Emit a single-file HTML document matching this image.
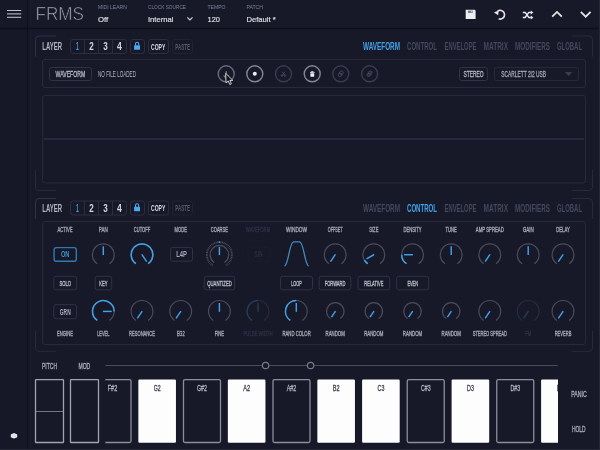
<!DOCTYPE html>
<html lang="en"><head><meta charset="utf-8"><title>FRMS</title>
<style>
html,body{margin:0;padding:0;background:#171929;overflow:hidden}
svg{display:block;will-change:transform;font-family:"Liberation Sans",sans-serif}
text{white-space:pre}
</style></head>
<body>
<svg width="600" height="450" viewBox="0 0 600 450">
<rect x="0" y="0" width="600" height="450" fill="#171929"/>
<rect x="0" y="0" width="27" height="450" fill="#161827"/>
<rect x="26.9" y="0" width="1.2" height="450" fill="#0e0f18"/>
<rect x="0" y="27.9" width="600" height="1.3" fill="#0d0e16"/>
<rect x="599" y="0" width="1" height="450" fill="#262838"/>
<rect x="0" y="449" width="600" height="1" fill="#262838"/>
<line x1="7.00" y1="10.50" x2="21.20" y2="10.50" stroke="#c2c3cd" stroke-width="1.05" />
<line x1="7.00" y1="13.90" x2="21.20" y2="13.90" stroke="#c2c3cd" stroke-width="1.05" />
<line x1="7.00" y1="17.30" x2="21.20" y2="17.30" stroke="#c2c3cd" stroke-width="1.05" />
<text x="35.50" y="20.00" font-size="19.2" fill="#a8a9b6" font-weight="normal" textLength="48.50" lengthAdjust="spacingAndGlyphs" stroke="#171929" stroke-width="0.65">FRMS</text>
<text x="98.00" y="9.10" font-size="6.2" fill="#7c819c" font-weight="normal" textLength="28.80" lengthAdjust="spacingAndGlyphs" >MIDI LEARN</text>
<text x="98.00" y="22.20" font-size="7.9" fill="#dcdde4" font-weight="normal" textLength="10.30" lengthAdjust="spacingAndGlyphs" stroke="#dcdde4" stroke-width="0.2">Off</text>
<text x="148.00" y="9.10" font-size="6.2" fill="#7c819c" font-weight="normal" textLength="38.00" lengthAdjust="spacingAndGlyphs" >CLOCK SOURCE</text>
<text x="148.00" y="22.20" font-size="7.9" fill="#dcdde4" font-weight="normal" textLength="25.50" lengthAdjust="spacingAndGlyphs" stroke="#dcdde4" stroke-width="0.2">Internal</text>
<text x="207.50" y="9.10" font-size="6.2" fill="#7c819c" font-weight="normal" textLength="18.00" lengthAdjust="spacingAndGlyphs" >TEMPO</text>
<text x="207.50" y="22.20" font-size="7.9" fill="#dcdde4" font-weight="normal" textLength="12.50" lengthAdjust="spacingAndGlyphs" stroke="#dcdde4" stroke-width="0.2">120</text>
<text x="246.40" y="9.10" font-size="6.2" fill="#7c819c" font-weight="normal" textLength="16.50" lengthAdjust="spacingAndGlyphs" >PATCH</text>
<text x="246.40" y="22.20" font-size="7.9" fill="#dcdde4" font-weight="normal" textLength="29.40" lengthAdjust="spacingAndGlyphs" stroke="#dcdde4" stroke-width="0.2">Default *</text>
<path d="M187.3 17.4 L189.9 19.9 L192.5 17.4" fill="none" stroke="#d4d5dc" stroke-width="1.1"/>
<path d="M465.7 9.7 h9 l0.9 0.9 v8.4 h-9.9 z" fill="#eeeef2"/>
<rect x="468" y="10.6" width="5" height="2.4" fill="#7a7c8a"/>
<rect x="471.4" y="10.9" width="1" height="1.6" fill="#eeeef2"/>
<path d="M497.6 11.1 A4.4 4.4 0 1 1 498.6 18.8" fill="none" stroke="#e6e6ea" stroke-width="1.6"/>
<path d="M493.9 12.6 L498.6 10.4 L498.2 15.2 z" fill="#e6e6ea"/>
<path d="M522.8 12.4 h2.4 l3.6 5 h2.6 M522.8 17.4 h2.4 l3.6 -5 h2.6" fill="none" stroke="#e6e6ea" stroke-width="1.5"/>
<path d="M530.8 10.4 l2.6 2 l-2.6 2 z M530.8 15.4 l2.6 2 l-2.6 2 z" fill="#e6e6ea"/>
<path d="M552.2 16.7 L557 11.9 L561.8 16.7" fill="none" stroke="#e6e6ea" stroke-width="1.7"/>
<path d="M580.8 11.8 L585.7 16.7 L590.6 11.8" fill="none" stroke="#e6e6ea" stroke-width="1.7"/>
<path d="M35.5 56.6 V39.5 a3.5 3.5 0 0 1 3.5 -3.5 H56.3" fill="none" stroke="#303246" stroke-width="1"/>
<path d="M571.7 36 H589.0 a3.5 3.5 0 0 1 3.5 3.5 V56.6" fill="none" stroke="#282a3a" stroke-width="1"/>
<path d="M35.5 169.9 V187.0 a3.5 3.5 0 0 0 3.5 3.5 H56.3" fill="none" stroke="#282a3a" stroke-width="1"/>
<path d="M571.7 190.5 H589.0 a3.5 3.5 0 0 0 3.5 -3.5 V169.9" fill="none" stroke="#282a3a" stroke-width="1"/>
<text x="42.30" y="50.00" font-size="10.0" fill="#b4b5c0" font-weight="bold" textLength="19.70" lengthAdjust="spacingAndGlyphs" >LAYER</text>
<rect x="70.50" y="39.50" width="56.00" height="14.00" rx="2.5" fill="none" stroke="#2c2e40" stroke-width="1" />
<line x1="84.50" y1="39.50" x2="84.50" y2="53.50" stroke="#2c2e40" stroke-width="1" />
<line x1="98.50" y1="39.50" x2="98.50" y2="53.50" stroke="#2c2e40" stroke-width="1" />
<line x1="112.50" y1="39.50" x2="112.50" y2="53.50" stroke="#2c2e40" stroke-width="1" />
<text x="76.10" y="50.10" font-size="10.0" fill="#3f9add" font-weight="bold" textLength="2.80" lengthAdjust="spacingAndGlyphs" >1</text>
<text x="89.25" y="50.10" font-size="10.0" fill="#d4d4dc" font-weight="bold" textLength="4.50" lengthAdjust="spacingAndGlyphs" >2</text>
<text x="103.25" y="50.10" font-size="10.0" fill="#d4d4dc" font-weight="bold" textLength="4.50" lengthAdjust="spacingAndGlyphs" >3</text>
<text x="117.10" y="50.10" font-size="10.0" fill="#d4d4dc" font-weight="bold" textLength="4.80" lengthAdjust="spacingAndGlyphs" >4</text>
<rect x="130.50" y="39.50" width="14.00" height="14.00" rx="2.5" fill="none" stroke="#2c2e40" stroke-width="1" />
<rect x="134.1" y="45.2" width="5.9" height="4.6" rx="0.6" fill="#4aaaf0"/>
<path d="M135.5 45.6 v-1.7 a1.6 1.6 0 0 1 3.2 0 v1.7" fill="none" stroke="#4aaaf0" stroke-width="1.1"/>
<rect x="148.50" y="39.50" width="20.00" height="14.00" rx="2.5" fill="none" stroke="#2c2e40" stroke-width="1" />
<text x="151.00" y="49.70" font-size="8.8" fill="#dcdce3" font-weight="bold" textLength="14.30" lengthAdjust="spacingAndGlyphs" >COPY</text>
<rect x="172.50" y="39.50" width="20.00" height="14.00" rx="2.5" fill="none" stroke="#212333" stroke-width="1" />
<text x="175.20" y="49.70" font-size="8.8" fill="#585b6e" font-weight="bold" textLength="14.80" lengthAdjust="spacingAndGlyphs" >PASTE</text>
<text x="363.00" y="50.00" font-size="10.8" fill="#41a2e6" font-weight="bold" textLength="37.00" lengthAdjust="spacingAndGlyphs" >WAVEFORM</text>
<text x="407.00" y="50.00" font-size="10.8" fill="#44475d" font-weight="bold" textLength="30.00" lengthAdjust="spacingAndGlyphs" >CONTROL</text>
<text x="444.50" y="50.00" font-size="10.8" fill="#44475d" font-weight="bold" textLength="32.00" lengthAdjust="spacingAndGlyphs" >ENVELOPE</text>
<text x="483.50" y="50.00" font-size="10.8" fill="#44475d" font-weight="bold" textLength="24.50" lengthAdjust="spacingAndGlyphs" >MATRIX</text>
<text x="515.00" y="50.00" font-size="10.8" fill="#44475d" font-weight="bold" textLength="35.00" lengthAdjust="spacingAndGlyphs" >MODIFIERS</text>
<text x="557.00" y="50.00" font-size="10.8" fill="#44475d" font-weight="bold" textLength="25.00" lengthAdjust="spacingAndGlyphs" >GLOBAL</text>
<rect x="42.50" y="59.50" width="543.00" height="28.00" rx="2.5" fill="none" stroke="#282a3a" stroke-width="1" />
<rect x="49.50" y="67.50" width="42.00" height="13.00" rx="2" fill="none" stroke="#303246" stroke-width="1" />
<text x="55.60" y="77.00" font-size="8.4" fill="#b6b7c2" font-weight="normal" textLength="29.60" lengthAdjust="spacingAndGlyphs"  stroke="#b6b7c2" stroke-width="0.32">WAVEFORM</text>
<text x="98.00" y="77.00" font-size="8.4" fill="#b4b5c0" font-weight="normal" textLength="38.00" lengthAdjust="spacingAndGlyphs" >NO FILE LOADED</text>
<circle cx="226.2" cy="73.8" r="8.0" fill="none" stroke="#686a7a" stroke-width="1.4"/>
<circle cx="254.8" cy="73.8" r="8.0" fill="none" stroke="#858793" stroke-width="1.4"/>
<circle cx="283.5" cy="73.8" r="8.0" fill="none" stroke="#3a3c4e" stroke-width="1.4"/>
<circle cx="312.2" cy="73.8" r="8.0" fill="none" stroke="#858793" stroke-width="1.4"/>
<circle cx="340.8" cy="73.8" r="8.0" fill="none" stroke="#3a3c4e" stroke-width="1.4"/>
<circle cx="369.6" cy="73.8" r="8.0" fill="none" stroke="#3a3c4e" stroke-width="1.4"/>
<path d="M226.2 71 v7.6 M223.6 75.4 l2.6 3 l2.6 -3" fill="none" stroke="#7c7e8c" stroke-width="1.1"/>
<circle cx="254.8" cy="73.8" r="2" fill="#f0f0f4"/>
<path d="M282 71.6 l2.8 3.6 M285 71.6 l-2.8 3.6" fill="none" stroke="#4a4c5e" stroke-width="0.9"/>
<circle cx="282" cy="75.6" r="0.9" fill="none" stroke="#4a4c5e" stroke-width="0.8"/><circle cx="285" cy="75.6" r="0.9" fill="none" stroke="#4a4c5e" stroke-width="0.8"/>
<path d="M310.4 73.3 h3.8 v2.9 a0.6 0.6 0 0 1 -0.6 0.6 h-2.6 a0.6 0.6 0 0 1 -0.6 -0.6 z" fill="#f0f0f4"/>
<path d="M310 72.4 h4.6 M311.3 71.6 h2" fill="none" stroke="#f0f0f4" stroke-width="0.9"/>
<g transform="translate(340.8 73.8) rotate(-20)" fill="none" stroke="#46485c" stroke-width="0.9"><rect x="-2.7" y="-0.9" width="3.3" height="3.1" rx="0.9"/><rect x="-0.7" y="-2.3" width="3.3" height="3.1" rx="0.9"/></g>
<g transform="translate(369.6 73.8) rotate(-20)" fill="none" stroke="#46485c" stroke-width="0.9"><rect x="-2.7" y="-0.9" width="3.3" height="3.1" rx="0.9"/><rect x="-0.7" y="-2.3" width="3.3" height="3.1" rx="0.9"/></g>
<path d="M367.40000000000003 76.2 L372.20000000000005 71.39999999999999" stroke="#46485c" stroke-width="0.8"/>
<path d="M225.7 73.3 l0.3 9.6 l2.2 -1.9 l1.6 3.5 l1.6 -0.7 l-1.6 -3.4 l3 0 z" fill="#14151d" stroke="#dcdce2" stroke-width="0.9" stroke-linejoin="round"/>
<rect x="459.50" y="67.50" width="28.10" height="13.00" rx="2" fill="none" stroke="#303246" stroke-width="1" />
<text x="463.40" y="77.00" font-size="8.4" fill="#b6b7c2" font-weight="normal" textLength="20.20" lengthAdjust="spacingAndGlyphs"  stroke="#b6b7c2" stroke-width="0.32">STEREO</text>
<rect x="494.50" y="67.50" width="84.00" height="13.00" rx="2" fill="none" stroke="#282a3a" stroke-width="1" />
<text x="501.30" y="77.00" font-size="8.4" fill="#a4a5b2" font-weight="normal" textLength="44.70" lengthAdjust="spacingAndGlyphs"  stroke="#a4a5b2" stroke-width="0.32">SCARLETT 2I2 USB</text>
<path d="M565 72 h7.4 l-3.7 4.2 z" fill="#3a3c4e"/>
<rect x="42.50" y="95.50" width="543.00" height="87.50" rx="2.5" fill="none" stroke="#282a3a" stroke-width="1" />
<line x1="44.00" y1="139.00" x2="584.00" y2="139.00" stroke="#383a4e" stroke-width="1" />
<path d="M35.5 219.1 V202.0 a3.5 3.5 0 0 1 3.5 -3.5 H56.3" fill="none" stroke="#303246" stroke-width="1"/>
<path d="M571.7 198.5 H589.0 a3.5 3.5 0 0 1 3.5 3.5 V219.1" fill="none" stroke="#282a3a" stroke-width="1"/>
<path d="M35.5 330.79999999999995 V347.9 a3.5 3.5 0 0 0 3.5 3.5 H56.3" fill="none" stroke="#282a3a" stroke-width="1"/>
<path d="M571.7 351.4 H589.0 a3.5 3.5 0 0 0 3.5 -3.5 V330.79999999999995" fill="none" stroke="#282a3a" stroke-width="1"/>
<text x="42.30" y="211.50" font-size="10.0" fill="#b4b5c0" font-weight="bold" textLength="19.70" lengthAdjust="spacingAndGlyphs" >LAYER</text>
<rect x="70.50" y="201.00" width="56.00" height="14.00" rx="2.5" fill="none" stroke="#2c2e40" stroke-width="1" />
<line x1="84.50" y1="201.00" x2="84.50" y2="215.00" stroke="#2c2e40" stroke-width="1" />
<line x1="98.50" y1="201.00" x2="98.50" y2="215.00" stroke="#2c2e40" stroke-width="1" />
<line x1="112.50" y1="201.00" x2="112.50" y2="215.00" stroke="#2c2e40" stroke-width="1" />
<text x="76.10" y="211.60" font-size="10.0" fill="#3f9add" font-weight="bold" textLength="2.80" lengthAdjust="spacingAndGlyphs" >1</text>
<text x="89.25" y="211.60" font-size="10.0" fill="#d4d4dc" font-weight="bold" textLength="4.50" lengthAdjust="spacingAndGlyphs" >2</text>
<text x="103.25" y="211.60" font-size="10.0" fill="#d4d4dc" font-weight="bold" textLength="4.50" lengthAdjust="spacingAndGlyphs" >3</text>
<text x="117.10" y="211.60" font-size="10.0" fill="#d4d4dc" font-weight="bold" textLength="4.80" lengthAdjust="spacingAndGlyphs" >4</text>
<rect x="130.50" y="201.00" width="14.00" height="14.00" rx="2.5" fill="none" stroke="#2c2e40" stroke-width="1" />
<rect x="134.1" y="206.7" width="5.9" height="4.6" rx="0.6" fill="#4aaaf0"/>
<path d="M135.5 207.1 v-1.7 a1.6 1.6 0 0 1 3.2 0 v1.7" fill="none" stroke="#4aaaf0" stroke-width="1.1"/>
<rect x="148.50" y="201.00" width="20.00" height="14.00" rx="2.5" fill="none" stroke="#2c2e40" stroke-width="1" />
<text x="151.00" y="211.20" font-size="8.8" fill="#dcdce3" font-weight="bold" textLength="14.30" lengthAdjust="spacingAndGlyphs" >COPY</text>
<rect x="172.50" y="201.00" width="20.00" height="14.00" rx="2.5" fill="none" stroke="#212333" stroke-width="1" />
<text x="175.20" y="211.20" font-size="8.8" fill="#585b6e" font-weight="bold" textLength="14.80" lengthAdjust="spacingAndGlyphs" >PASTE</text>
<text x="363.00" y="211.50" font-size="10.8" fill="#44475d" font-weight="bold" textLength="37.00" lengthAdjust="spacingAndGlyphs" >WAVEFORM</text>
<text x="407.00" y="211.50" font-size="10.8" fill="#41a2e6" font-weight="bold" textLength="30.00" lengthAdjust="spacingAndGlyphs" >CONTROL</text>
<text x="444.50" y="211.50" font-size="10.8" fill="#44475d" font-weight="bold" textLength="32.00" lengthAdjust="spacingAndGlyphs" >ENVELOPE</text>
<text x="483.50" y="211.50" font-size="10.8" fill="#44475d" font-weight="bold" textLength="24.50" lengthAdjust="spacingAndGlyphs" >MATRIX</text>
<text x="515.00" y="211.50" font-size="10.8" fill="#44475d" font-weight="bold" textLength="35.00" lengthAdjust="spacingAndGlyphs" >MODIFIERS</text>
<text x="557.00" y="211.50" font-size="10.8" fill="#44475d" font-weight="bold" textLength="25.00" lengthAdjust="spacingAndGlyphs" >GLOBAL</text>
<rect x="42.50" y="221.50" width="543.00" height="123.00" rx="2.5" fill="none" stroke="#282a3a" stroke-width="1" />
<text x="57.50" y="232.20" font-size="6.8" fill="#a9aab7" font-weight="normal" textLength="15.00" lengthAdjust="spacingAndGlyphs"  stroke="#a9aab7" stroke-width="0.32">ACTIVE</text>
<text x="98.80" y="232.20" font-size="6.8" fill="#a9aab7" font-weight="normal" textLength="9.00" lengthAdjust="spacingAndGlyphs"  stroke="#a9aab7" stroke-width="0.32">PAN</text>
<text x="133.80" y="232.20" font-size="6.8" fill="#a9aab7" font-weight="normal" textLength="16.40" lengthAdjust="spacingAndGlyphs"  stroke="#a9aab7" stroke-width="0.32">CUTOFF</text>
<text x="174.50" y="232.20" font-size="6.8" fill="#a9aab7" font-weight="normal" textLength="12.40" lengthAdjust="spacingAndGlyphs"  stroke="#a9aab7" stroke-width="0.32">MODE</text>
<text x="210.80" y="232.20" font-size="6.8" fill="#a9aab7" font-weight="normal" textLength="17.20" lengthAdjust="spacingAndGlyphs"  stroke="#a9aab7" stroke-width="0.32">COARSE</text>
<text x="245.80" y="232.20" font-size="6.8" fill="#2f3142" font-weight="normal" textLength="24.40" lengthAdjust="spacingAndGlyphs"  stroke="#2f3142" stroke-width="0.32">WAVEFORM</text>
<text x="286.10" y="232.20" font-size="6.8" fill="#a9aab7" font-weight="normal" textLength="21.00" lengthAdjust="spacingAndGlyphs"  stroke="#a9aab7" stroke-width="0.32">WINDOW</text>
<text x="327.70" y="232.20" font-size="6.8" fill="#a9aab7" font-weight="normal" textLength="15.00" lengthAdjust="spacingAndGlyphs"  stroke="#a9aab7" stroke-width="0.32">OFFSET</text>
<text x="369.20" y="232.20" font-size="6.8" fill="#a9aab7" font-weight="normal" textLength="9.20" lengthAdjust="spacingAndGlyphs"  stroke="#a9aab7" stroke-width="0.32">SIZE</text>
<text x="403.50" y="232.20" font-size="6.8" fill="#a9aab7" font-weight="normal" textLength="18.00" lengthAdjust="spacingAndGlyphs"  stroke="#a9aab7" stroke-width="0.32">DENSITY</text>
<text x="445.60" y="232.20" font-size="6.8" fill="#a9aab7" font-weight="normal" textLength="11.20" lengthAdjust="spacingAndGlyphs"  stroke="#a9aab7" stroke-width="0.32">TUNE</text>
<text x="475.80" y="232.20" font-size="6.8" fill="#a9aab7" font-weight="normal" textLength="28.00" lengthAdjust="spacingAndGlyphs"  stroke="#a9aab7" stroke-width="0.32">AMP SPREAD</text>
<text x="522.70" y="232.20" font-size="6.8" fill="#a9aab7" font-weight="normal" textLength="11.00" lengthAdjust="spacingAndGlyphs"  stroke="#a9aab7" stroke-width="0.32">GAIN</text>
<text x="556.25" y="232.20" font-size="6.8" fill="#a9aab7" font-weight="normal" textLength="13.50" lengthAdjust="spacingAndGlyphs"  stroke="#a9aab7" stroke-width="0.32">DELAY</text>
<text x="57.10" y="335.70" font-size="6.8" fill="#a9aab7" font-weight="normal" textLength="15.80" lengthAdjust="spacingAndGlyphs"  stroke="#a9aab7" stroke-width="0.32">ENGINE</text>
<text x="97.15" y="335.70" font-size="6.8" fill="#a9aab7" font-weight="normal" textLength="12.30" lengthAdjust="spacingAndGlyphs"  stroke="#a9aab7" stroke-width="0.32">LEVEL</text>
<text x="129.10" y="335.70" font-size="6.8" fill="#a9aab7" font-weight="normal" textLength="25.80" lengthAdjust="spacingAndGlyphs"  stroke="#a9aab7" stroke-width="0.32">RESONANCE</text>
<text x="176.70" y="335.70" font-size="6.8" fill="#a9aab7" font-weight="normal" textLength="8.00" lengthAdjust="spacingAndGlyphs"  stroke="#a9aab7" stroke-width="0.32">EG2</text>
<text x="214.65" y="335.70" font-size="6.8" fill="#a9aab7" font-weight="normal" textLength="9.50" lengthAdjust="spacingAndGlyphs"  stroke="#a9aab7" stroke-width="0.32">FINE</text>
<text x="243.50" y="335.70" font-size="6.8" fill="#2f3142" font-weight="normal" textLength="29.00" lengthAdjust="spacingAndGlyphs"  stroke="#2f3142" stroke-width="0.32">PULSE WIDTH</text>
<text x="282.45" y="335.70" font-size="6.8" fill="#a9aab7" font-weight="normal" textLength="28.30" lengthAdjust="spacingAndGlyphs"  stroke="#a9aab7" stroke-width="0.32">RAND COLOR</text>
<text x="325.55" y="335.70" font-size="6.8" fill="#a9aab7" font-weight="normal" textLength="19.30" lengthAdjust="spacingAndGlyphs"  stroke="#a9aab7" stroke-width="0.32">RANDOM</text>
<text x="364.15" y="335.70" font-size="6.8" fill="#a9aab7" font-weight="normal" textLength="19.30" lengthAdjust="spacingAndGlyphs"  stroke="#a9aab7" stroke-width="0.32">RANDOM</text>
<text x="402.85" y="335.70" font-size="6.8" fill="#a9aab7" font-weight="normal" textLength="19.30" lengthAdjust="spacingAndGlyphs"  stroke="#a9aab7" stroke-width="0.32">RANDOM</text>
<text x="441.55" y="335.70" font-size="6.8" fill="#a9aab7" font-weight="normal" textLength="19.30" lengthAdjust="spacingAndGlyphs"  stroke="#a9aab7" stroke-width="0.32">RANDOM</text>
<text x="472.70" y="335.70" font-size="6.8" fill="#a9aab7" font-weight="normal" textLength="34.20" lengthAdjust="spacingAndGlyphs"  stroke="#a9aab7" stroke-width="0.32">STEREO SPREAD</text>
<text x="525.20" y="335.70" font-size="6.8" fill="#2f3142" font-weight="normal" textLength="6.00" lengthAdjust="spacingAndGlyphs"  stroke="#2f3142" stroke-width="0.32">FM</text>
<text x="554.65" y="335.70" font-size="6.8" fill="#a9aab7" font-weight="normal" textLength="16.70" lengthAdjust="spacingAndGlyphs"  stroke="#a9aab7" stroke-width="0.32">REVERB</text>
<rect x="54.10" y="247.60" width="22.20" height="13.60" rx="2.2" fill="none" stroke="#3079b0" stroke-width="1.4" />
<text x="60.95" y="257.23" font-size="8.2" fill="#3f92cc" font-weight="bold" textLength="8.50" lengthAdjust="spacingAndGlyphs" >ON</text>
<rect x="170.50" y="247.40" width="22.00" height="13.80" rx="2.2" fill="none" stroke="#303246" stroke-width="1" />
<text x="176.20" y="257.34" font-size="8.8" fill="#a9aab7" font-weight="bold" textLength="10.60" lengthAdjust="spacingAndGlyphs" >L4P</text>
<rect x="247.80" y="247.40" width="21.40" height="13.80" rx="2.2" fill="none" stroke="#1b1d2c" stroke-width="1" />
<text x="254.30" y="257.34" font-size="8.8" fill="#2b2d3c" font-weight="bold" textLength="8.40" lengthAdjust="spacingAndGlyphs" >SIN</text>
<rect x="53.80" y="276.30" width="22.90" height="13.50" rx="2.2" fill="none" stroke="#303246" stroke-width="1" />
<text x="59.50" y="285.78" font-size="7.9" fill="#c0c1cc" font-weight="normal" textLength="11.50" lengthAdjust="spacingAndGlyphs"  stroke="#c0c1cc" stroke-width="0.32">SOLO</text>
<rect x="95.20" y="276.30" width="16.50" height="13.50" rx="2.2" fill="none" stroke="#303246" stroke-width="1" />
<text x="99.35" y="285.78" font-size="7.9" fill="#c0c1cc" font-weight="normal" textLength="8.20" lengthAdjust="spacingAndGlyphs"  stroke="#c0c1cc" stroke-width="0.32">KEY</text>
<rect x="204.30" y="276.30" width="30.40" height="13.50" rx="2.2" fill="none" stroke="#303246" stroke-width="1" />
<text x="207.20" y="285.78" font-size="7.9" fill="#c0c1cc" font-weight="normal" textLength="24.60" lengthAdjust="spacingAndGlyphs"  stroke="#c0c1cc" stroke-width="0.32">QUANTIZED</text>
<rect x="280.50" y="276.30" width="32.00" height="13.50" rx="2.2" fill="none" stroke="#303246" stroke-width="1" />
<text x="291.20" y="285.78" font-size="7.9" fill="#c0c1cc" font-weight="normal" textLength="10.60" lengthAdjust="spacingAndGlyphs"  stroke="#c0c1cc" stroke-width="0.32">LOOP</text>
<rect x="319.20" y="276.30" width="31.60" height="13.50" rx="2.2" fill="none" stroke="#303246" stroke-width="1" />
<text x="324.70" y="285.78" font-size="7.9" fill="#c0c1cc" font-weight="normal" textLength="20.60" lengthAdjust="spacingAndGlyphs"  stroke="#c0c1cc" stroke-width="0.32">FORWARD</text>
<rect x="358.00" y="276.30" width="31.70" height="13.50" rx="2.2" fill="none" stroke="#303246" stroke-width="1" />
<text x="364.35" y="285.78" font-size="7.9" fill="#c0c1cc" font-weight="normal" textLength="19.00" lengthAdjust="spacingAndGlyphs"  stroke="#c0c1cc" stroke-width="0.32">RELATIVE</text>
<rect x="396.70" y="276.30" width="32.00" height="13.50" rx="2.2" fill="none" stroke="#303246" stroke-width="1" />
<text x="407.40" y="285.78" font-size="7.9" fill="#c0c1cc" font-weight="normal" textLength="10.60" lengthAdjust="spacingAndGlyphs"  stroke="#c0c1cc" stroke-width="0.32">EVEN</text>
<rect x="53.80" y="304.70" width="22.90" height="14.00" rx="2.2" fill="none" stroke="#303246" stroke-width="1" />
<text x="59.85" y="314.60" font-size="8.4" fill="#adaeba" font-weight="bold" textLength="10.80" lengthAdjust="spacingAndGlyphs" >GRN</text>
<path d="M97.20 263.74 A10.9 10.9 0 1 1 109.40 263.74" fill="none" stroke="#4a4c5c" stroke-width="1.2" />
<line x1="103.30" y1="255.10" x2="103.30" y2="246.30" stroke="#41a2e6" stroke-width="1.45" />
<path d="M135.90 263.74 A10.9 10.9 0 1 1 148.10 263.74" fill="none" stroke="#4a4c5c" stroke-width="1.2" />
<path d="M135.96 263.65 A10.8 10.8 0 1 1 148.04 263.65" fill="none" stroke="#41a2e6" stroke-width="1.5" />
<line x1="141.78" y1="254.37" x2="146.70" y2="261.66" stroke="#41a2e6" stroke-width="1.45" />
<line x1="212.86" y1="264.40" x2="211.91" y2="265.81" stroke="#585a6c" stroke-width="0.85" />
<line x1="211.68" y1="263.49" x2="210.56" y2="264.77" stroke="#585a6c" stroke-width="0.85" />
<line x1="210.62" y1="262.44" x2="209.35" y2="263.56" stroke="#585a6c" stroke-width="0.85" />
<line x1="209.71" y1="261.26" x2="208.30" y2="262.21" stroke="#585a6c" stroke-width="0.85" />
<line x1="208.96" y1="259.98" x2="207.44" y2="260.74" stroke="#585a6c" stroke-width="0.85" />
<line x1="208.37" y1="258.61" x2="206.77" y2="259.17" stroke="#585a6c" stroke-width="0.85" />
<line x1="207.96" y1="257.17" x2="206.30" y2="257.53" stroke="#585a6c" stroke-width="0.85" />
<line x1="207.74" y1="255.70" x2="206.05" y2="255.84" stroke="#585a6c" stroke-width="0.85" />
<line x1="207.71" y1="254.21" x2="206.01" y2="254.14" stroke="#585a6c" stroke-width="0.85" />
<line x1="207.87" y1="252.73" x2="206.19" y2="252.44" stroke="#585a6c" stroke-width="0.85" />
<line x1="208.21" y1="251.28" x2="206.59" y2="250.78" stroke="#585a6c" stroke-width="0.85" />
<line x1="208.74" y1="249.89" x2="207.19" y2="249.19" stroke="#585a6c" stroke-width="0.85" />
<line x1="209.43" y1="248.57" x2="207.99" y2="247.68" stroke="#585a6c" stroke-width="0.85" />
<line x1="210.29" y1="247.35" x2="208.97" y2="246.29" stroke="#585a6c" stroke-width="0.85" />
<line x1="211.30" y1="246.26" x2="210.13" y2="245.03" stroke="#585a6c" stroke-width="0.85" />
<line x1="212.44" y1="245.29" x2="211.43" y2="243.93" stroke="#585a6c" stroke-width="0.85" />
<line x1="213.69" y1="244.49" x2="212.86" y2="243.00" stroke="#585a6c" stroke-width="0.85" />
<line x1="215.04" y1="243.84" x2="214.40" y2="242.27" stroke="#585a6c" stroke-width="0.85" />
<line x1="216.45" y1="243.38" x2="216.02" y2="241.73" stroke="#585a6c" stroke-width="0.85" />
<line x1="217.91" y1="243.09" x2="217.70" y2="241.41" stroke="#585a6c" stroke-width="0.85" />
<line x1="219.40" y1="243.00" x2="219.40" y2="241.30" stroke="#41a2e6" stroke-width="1.5" />
<line x1="220.89" y1="243.09" x2="221.10" y2="241.41" stroke="#585a6c" stroke-width="0.85" />
<line x1="222.35" y1="243.38" x2="222.78" y2="241.73" stroke="#585a6c" stroke-width="0.85" />
<line x1="223.76" y1="243.84" x2="224.40" y2="242.27" stroke="#585a6c" stroke-width="0.85" />
<line x1="225.11" y1="244.49" x2="225.94" y2="243.00" stroke="#585a6c" stroke-width="0.85" />
<line x1="226.36" y1="245.29" x2="227.37" y2="243.93" stroke="#585a6c" stroke-width="0.85" />
<line x1="227.50" y1="246.26" x2="228.67" y2="245.03" stroke="#585a6c" stroke-width="0.85" />
<line x1="228.51" y1="247.35" x2="229.83" y2="246.29" stroke="#585a6c" stroke-width="0.85" />
<line x1="229.37" y1="248.57" x2="230.81" y2="247.68" stroke="#585a6c" stroke-width="0.85" />
<line x1="230.06" y1="249.89" x2="231.61" y2="249.19" stroke="#585a6c" stroke-width="0.85" />
<line x1="230.59" y1="251.28" x2="232.21" y2="250.78" stroke="#585a6c" stroke-width="0.85" />
<line x1="230.93" y1="252.73" x2="232.61" y2="252.44" stroke="#585a6c" stroke-width="0.85" />
<line x1="231.09" y1="254.21" x2="232.79" y2="254.14" stroke="#585a6c" stroke-width="0.85" />
<line x1="231.06" y1="255.70" x2="232.75" y2="255.84" stroke="#585a6c" stroke-width="0.85" />
<line x1="230.84" y1="257.17" x2="232.50" y2="257.53" stroke="#585a6c" stroke-width="0.85" />
<line x1="230.43" y1="258.61" x2="232.03" y2="259.17" stroke="#585a6c" stroke-width="0.85" />
<line x1="229.84" y1="259.98" x2="231.36" y2="260.74" stroke="#585a6c" stroke-width="0.85" />
<line x1="229.09" y1="261.26" x2="230.50" y2="262.21" stroke="#585a6c" stroke-width="0.85" />
<line x1="228.18" y1="262.44" x2="229.45" y2="263.56" stroke="#585a6c" stroke-width="0.85" />
<line x1="227.12" y1="263.49" x2="228.24" y2="264.77" stroke="#585a6c" stroke-width="0.85" />
<line x1="225.94" y1="264.40" x2="226.89" y2="265.81" stroke="#585a6c" stroke-width="0.85" />
<path d="M214.20 262.41 A9.3 9.3 0 1 1 224.60 262.41" fill="none" stroke="#4a4c5c" stroke-width="1.2" />
<line x1="219.40" y1="255.10" x2="219.40" y2="246.90" stroke="#41a2e6" stroke-width="1.45" />
<path d="M284.6 266.3 C288.8 263.5 289.4 241.9 293.6 241.9 H299.6 C303.8 241.9 304.4 263.5 308.6 266.3" fill="none" stroke="#4289ba" stroke-width="1.3"/>
<path d="M329.10 263.74 A10.9 10.9 0 1 1 341.30 263.74" fill="none" stroke="#4a4c5c" stroke-width="1.2" />
<line x1="335.42" y1="254.37" x2="330.50" y2="261.66" stroke="#41a2e6" stroke-width="1.45" />
<path d="M367.70 263.74 A10.9 10.9 0 1 1 379.90 263.74" fill="none" stroke="#4a4c5c" stroke-width="1.2" />
<path d="M367.76 263.65 A10.8 10.8 0 0 1 364.45 260.10" fill="none" stroke="#41a2e6" stroke-width="1.5" />
<line x1="374.15" y1="254.50" x2="366.53" y2="258.90" stroke="#41a2e6" stroke-width="1.45" />
<path d="M406.40 263.74 A10.9 10.9 0 1 1 418.60 263.74" fill="none" stroke="#4a4c5c" stroke-width="1.2" />
<path d="M406.46 263.65 A10.8 10.8 0 0 1 401.70 254.70" fill="none" stroke="#41a2e6" stroke-width="1.5" />
<line x1="412.90" y1="254.70" x2="404.10" y2="254.70" stroke="#41a2e6" stroke-width="1.45" />
<path d="M445.10 263.74 A10.9 10.9 0 1 1 457.30 263.74" fill="none" stroke="#4a4c5c" stroke-width="1.2" />
<line x1="451.20" y1="255.10" x2="451.20" y2="246.30" stroke="#41a2e6" stroke-width="1.45" />
<path d="M483.70 263.74 A10.9 10.9 0 1 1 495.90 263.74" fill="none" stroke="#4a4c5c" stroke-width="1.2" />
<line x1="490.02" y1="254.37" x2="485.10" y2="261.66" stroke="#41a2e6" stroke-width="1.45" />
<path d="M522.10 263.74 A10.9 10.9 0 1 1 534.30 263.74" fill="none" stroke="#4a4c5c" stroke-width="1.2" />
<line x1="528.20" y1="255.10" x2="528.20" y2="246.30" stroke="#41a2e6" stroke-width="1.45" />
<path d="M556.90 263.74 A10.9 10.9 0 1 1 569.10 263.74" fill="none" stroke="#4a4c5c" stroke-width="1.2" />
<line x1="563.22" y1="254.37" x2="558.30" y2="261.66" stroke="#41a2e6" stroke-width="1.45" />
<path d="M97.20 320.44 A10.9 10.9 0 1 1 109.40 320.44" fill="none" stroke="#4a4c5c" stroke-width="1.2" />
<path d="M97.26 320.35 A10.8 10.8 0 1 1 114.10 311.40" fill="none" stroke="#41a2e6" stroke-width="1.5" />
<line x1="102.90" y1="311.40" x2="111.70" y2="311.40" stroke="#41a2e6" stroke-width="1.45" />
<path d="M135.90 320.44 A10.9 10.9 0 1 1 148.10 320.44" fill="none" stroke="#4a4c5c" stroke-width="1.2" />
<line x1="142.22" y1="311.07" x2="137.30" y2="318.36" stroke="#41a2e6" stroke-width="1.45" />
<path d="M174.60 320.44 A10.9 10.9 0 1 1 186.80 320.44" fill="none" stroke="#4a4c5c" stroke-width="1.2" />
<line x1="180.92" y1="311.07" x2="176.00" y2="318.36" stroke="#41a2e6" stroke-width="1.45" />
<path d="M213.30 320.44 A10.9 10.9 0 1 1 225.50 320.44" fill="none" stroke="#4a4c5c" stroke-width="1.2" />
<line x1="219.40" y1="311.80" x2="219.40" y2="303.00" stroke="#41a2e6" stroke-width="1.45" />
<path d="M251.90 320.44 A10.9 10.9 0 1 1 264.10 320.44" fill="none" stroke="#2a2c3c" stroke-width="1.2" />
<path d="M251.96 320.35 A10.8 10.8 0 0 1 258.00 300.60" fill="none" stroke="#203d58" stroke-width="1.5" />
<line x1="258.00" y1="311.80" x2="258.00" y2="303.00" stroke="#2a3c50" stroke-width="1.45" />
<path d="M290.20 320.44 A10.9 10.9 0 1 1 302.40 320.44" fill="none" stroke="#4a4c5c" stroke-width="1.2" />
<path d="M290.26 320.35 A10.8 10.8 0 0 1 296.30 300.60" fill="none" stroke="#41a2e6" stroke-width="1.5" />
<line x1="296.30" y1="311.80" x2="296.30" y2="303.00" stroke="#41a2e6" stroke-width="1.45" />
<path d="M330.44 318.61 A8.7 8.7 0 1 1 340.16 318.61" fill="none" stroke="#4a4c5c" stroke-width="1.2" />
<line x1="335.52" y1="311.07" x2="331.50" y2="317.04" stroke="#41a2e6" stroke-width="1.45" />
<path d="M368.94 318.61 A8.7 8.7 0 1 1 378.66 318.61" fill="none" stroke="#4a4c5c" stroke-width="1.2" />
<line x1="374.02" y1="311.07" x2="370.00" y2="317.04" stroke="#41a2e6" stroke-width="1.45" />
<path d="M407.64 318.61 A8.7 8.7 0 1 1 417.36 318.61" fill="none" stroke="#4a4c5c" stroke-width="1.2" />
<line x1="412.72" y1="311.07" x2="408.70" y2="317.04" stroke="#41a2e6" stroke-width="1.45" />
<path d="M446.34 318.61 A8.7 8.7 0 1 1 456.06 318.61" fill="none" stroke="#4a4c5c" stroke-width="1.2" />
<line x1="451.42" y1="311.07" x2="447.40" y2="317.04" stroke="#41a2e6" stroke-width="1.45" />
<path d="M483.70 320.44 A10.9 10.9 0 1 1 495.90 320.44" fill="none" stroke="#4a4c5c" stroke-width="1.2" />
<line x1="490.02" y1="311.07" x2="485.10" y2="318.36" stroke="#41a2e6" stroke-width="1.45" />
<path d="M522.10 320.44 A10.9 10.9 0 1 1 534.30 320.44" fill="none" stroke="#2a2c3c" stroke-width="1.2" />
<line x1="528.42" y1="311.07" x2="523.50" y2="318.36" stroke="#2a3c50" stroke-width="1.45" />
<path d="M556.90 320.44 A10.9 10.9 0 1 1 569.10 320.44" fill="none" stroke="#4a4c5c" stroke-width="1.2" />
<line x1="563.22" y1="311.07" x2="558.30" y2="318.36" stroke="#41a2e6" stroke-width="1.45" />
<text x="42.00" y="368.70" font-size="8.5" fill="#adaeba" font-weight="normal" textLength="15.00" lengthAdjust="spacingAndGlyphs"  stroke="#adaeba" stroke-width="0.32">PITCH</text>
<text x="78.40" y="368.70" font-size="8.5" fill="#adaeba" font-weight="normal" textLength="11.90" lengthAdjust="spacingAndGlyphs"  stroke="#adaeba" stroke-width="0.32">MOD</text>
<line x1="105.30" y1="365.50" x2="557.80" y2="365.50" stroke="#4a4c5e" stroke-width="1" />
<circle cx="265.6" cy="365.5" r="3.2" fill="#171929" stroke="#777988" stroke-width="1.2"/>
<circle cx="310.6" cy="365.5" r="3.2" fill="#171929" stroke="#777988" stroke-width="1.2"/>
<rect x="35.50" y="379.60" width="28.00" height="62.90" rx="0.6" fill="none" stroke="#a2a3af" stroke-width="1.3" />
<line x1="36.00" y1="411.50" x2="63.00" y2="411.50" stroke="#747684" stroke-width="1" />
<rect x="70.50" y="379.60" width="28.00" height="62.90" rx="0.6" fill="none" stroke="#a2a3af" stroke-width="1.3" />
<clipPath id="kc"><rect x="105.3" y="370" width="452.7" height="80"/></clipPath>
<g clip-path="url(#kc)">
<rect x="94.00" y="379.60" width="37.00" height="62.90" rx="1.5" fill="none" stroke="#8d8e9b" stroke-width="1.3" />
<text x="107.75" y="391.30" font-size="9.1" fill="#b4b5c0" font-weight="normal" textLength="9.50" lengthAdjust="spacingAndGlyphs"  stroke="#b4b5c0" stroke-width="0.32">F#2</text>
<rect x="138.35" y="379.50" width="37.6" height="63.25" rx="1.2" fill="#fdfdfe"/>
<text x="153.75" y="391.30" font-size="9.1" fill="#3a3c4a" font-weight="normal" textLength="7.00" lengthAdjust="spacingAndGlyphs"  stroke="#3a3c4a" stroke-width="0.32">G2</text>
<rect x="183.50" y="379.60" width="37.00" height="62.90" rx="1.5" fill="none" stroke="#8d8e9b" stroke-width="1.3" />
<text x="197.00" y="391.30" font-size="9.1" fill="#b4b5c0" font-weight="normal" textLength="10.00" lengthAdjust="spacingAndGlyphs"  stroke="#b4b5c0" stroke-width="0.32">G#2</text>
<rect x="227.85" y="379.50" width="37.6" height="63.25" rx="1.2" fill="#fdfdfe"/>
<text x="243.35" y="391.30" font-size="9.1" fill="#3a3c4a" font-weight="normal" textLength="6.80" lengthAdjust="spacingAndGlyphs"  stroke="#3a3c4a" stroke-width="0.32">A2</text>
<rect x="273.00" y="379.60" width="37.00" height="62.90" rx="1.5" fill="none" stroke="#8d8e9b" stroke-width="1.3" />
<text x="286.70" y="391.30" font-size="9.1" fill="#b4b5c0" font-weight="normal" textLength="9.60" lengthAdjust="spacingAndGlyphs"  stroke="#b4b5c0" stroke-width="0.32">A#2</text>
<rect x="317.35" y="379.50" width="37.6" height="63.25" rx="1.2" fill="#fdfdfe"/>
<text x="332.85" y="391.30" font-size="9.1" fill="#3a3c4a" font-weight="normal" textLength="6.80" lengthAdjust="spacingAndGlyphs"  stroke="#3a3c4a" stroke-width="0.32">B2</text>
<rect x="362.10" y="379.50" width="37.6" height="63.25" rx="1.2" fill="#fdfdfe"/>
<text x="377.60" y="391.30" font-size="9.1" fill="#3a3c4a" font-weight="normal" textLength="6.80" lengthAdjust="spacingAndGlyphs"  stroke="#3a3c4a" stroke-width="0.32">C3</text>
<rect x="407.25" y="379.60" width="37.00" height="62.90" rx="1.5" fill="none" stroke="#8d8e9b" stroke-width="1.3" />
<text x="420.95" y="391.30" font-size="9.1" fill="#b4b5c0" font-weight="normal" textLength="9.60" lengthAdjust="spacingAndGlyphs"  stroke="#b4b5c0" stroke-width="0.32">C#3</text>
<rect x="451.60" y="379.50" width="37.6" height="63.25" rx="1.2" fill="#fdfdfe"/>
<text x="467.10" y="391.30" font-size="9.1" fill="#3a3c4a" font-weight="normal" textLength="6.80" lengthAdjust="spacingAndGlyphs"  stroke="#3a3c4a" stroke-width="0.32">D3</text>
<rect x="496.75" y="379.60" width="37.00" height="62.90" rx="1.5" fill="none" stroke="#8d8e9b" stroke-width="1.3" />
<text x="510.45" y="391.30" font-size="9.1" fill="#b4b5c0" font-weight="normal" textLength="9.60" lengthAdjust="spacingAndGlyphs"  stroke="#b4b5c0" stroke-width="0.32">D#3</text>
<rect x="541.10" y="379.50" width="37.6" height="63.25" rx="1.2" fill="#fdfdfe"/>
<text x="556.80" y="391.30" font-size="9.1" fill="#3a3c4a" font-weight="normal" textLength="6.40" lengthAdjust="spacingAndGlyphs"  stroke="#3a3c4a" stroke-width="0.32">E3</text>
</g>
<text x="571.30" y="396.50" font-size="8.8" fill="#adaeba" font-weight="normal" textLength="15.40" lengthAdjust="spacingAndGlyphs"  stroke="#adaeba" stroke-width="0.32">PANIC</text>
<text x="572.00" y="431.80" font-size="8.8" fill="#adaeba" font-weight="normal" textLength="13.60" lengthAdjust="spacingAndGlyphs"  stroke="#adaeba" stroke-width="0.32">HOLD</text>
<path d="M10.8 434.4 l3.2 -1.4 l3.2 1.4 v2.8 l-3.2 1.4 l-3.2 -1.4 z" fill="#f0f0f4"/>
<path d="M12.9 434.6 v2.4 M15.1 434.6 v2.4" stroke="#a4a5b2" stroke-width="0.5" fill="none"/>
</svg>
</body></html>
